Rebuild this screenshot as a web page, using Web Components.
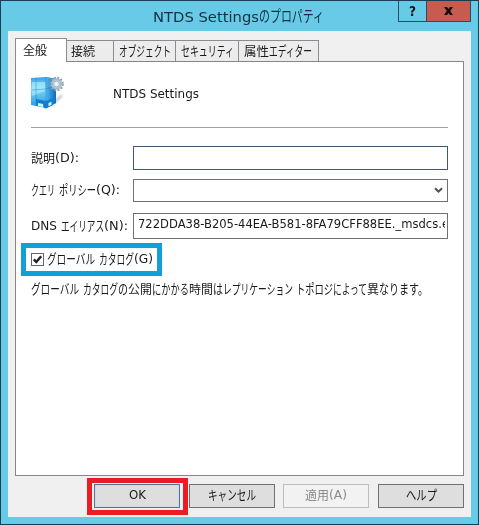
<!DOCTYPE html>
<html lang="ja"><head><meta charset="utf-8"><title>NTDS Settingsのプロパティ</title>
<style>html,body{margin:0;width:479px;height:525px;overflow:hidden}</style></head>
<body><ntds-dialog></ntds-dialog>
<script>
const define = (name, html, ready) => customElements.define(name, class extends HTMLElement {
  constructor() { super(); this.attachShadow({mode: 'open'}).innerHTML = html; }
  connectedCallback() { if (ready) ready(this, this.shadowRoot); }
});

// A run of text condensed to the advance width given in "w"; "g" is the gap before it.
// Kana are set larger before condensing, which gives tall, narrow forms.
define('ui-run', `<style>:host{display:block;flex:none;white-space:pre}span{display:inline-block;transform-origin:0 50%;vertical-align:top}</style><span><slot></slot></span>`,
  (el, root) => {
    const s = root.querySelector('span'), w = parseFloat(el.getAttribute('w'));
    if (/^[\u3040-\u30ff]/.test(el.textContent)) s.style.fontSize = '1.12em';
    else if (/^[\u4e00-\u9fff]/.test(el.textContent)) s.style.fontSize = '1.04em';
    el.style.width = w + 'px';
    el.style.marginLeft = (el.getAttribute('g') || 0) + 'px';
    s.style.transform = 'scaleX(' + w / s.getBoundingClientRect().width + ')';
  });

define('ui-tab', `<style>
:host{box-sizing:border-box;display:flex;height:21px;border:1px solid #8b8b92;border-left:0;border-bottom:0;padding:1px 0 0 5px;align-items:center;background:#ececed}
:host([active]){height:24px;background:#fff;border-left:1px solid #8b8b92;padding-left:7px;padding-bottom:2px;margin-bottom:-1px;z-index:1}
</style><slot></slot>`);

define('ui-field', `<style>
:host{box-sizing:border-box;display:flex;width:315px;border:1px solid #6f7072;background:#fff;padding:0 2px 0 4px;align-items:center;flex:none}
:host([focused]){border-color:#3d5a70}
.v{display:flex;overflow:hidden;flex:1;min-width:0}
svg{display:none;margin-right:2px}:host([combo]) svg{display:block}
</style><div class="v"><slot></slot></div><svg width="9" height="7" viewBox="0 0 9 7"><path d="M1 1.2 4.5 4.7 8 1.2" fill="none" stroke="#505050" stroke-width="2"/></svg>`);

define('ui-row', `<style>:host{display:flex;align-items:center}.l{display:flex;width:102px;flex:none}</style><div class="l"><slot name="label"></slot></div><slot></slot>`);

define('ui-label', `<style>:host{display:flex}</style><slot></slot>`);

define('ui-button', `<style>
:host{box-sizing:border-box;display:flex;width:86px;height:24px;border:1px solid #707070;background:#dedede;align-items:center;justify-content:center;padding-bottom:1px;flex:none}
:host([default]){border-color:#4f7895;box-shadow:inset 0 0 0 1px #cbdbe5}
:host([disabled]){border-color:#bdbdbd;background:#f2f2f2;color:#8b8b8b}
</style><slot></slot>`);

define('ui-highlight', `<style>:host{box-sizing:border-box;display:flex;align-items:center;border:5px solid var(--mark)}</style><slot></slot>`);

define('ui-check', `<style>:host{display:flex;align-items:center}svg{display:block;margin-right:3px}</style>
<svg width="13" height="13" viewBox="0 0 13 13"><rect x=".5" y=".5" width="12" height="12" fill="#fff" stroke="#666"/><path d="M2.8 6.4 5.3 9 10.2 3.2" fill="none" stroke="#222" stroke-width="2.4"/></svg><slot></slot>`);

define('server-icon', `<style>:host{display:block;width:34px;height:34px;flex:none;margin-bottom:3px}svg{display:block}</style>
<svg width="34" height="34" viewBox="0 0 34 34">
<defs><linearGradient id="f" x1="0" y1="0" x2="0" y2="1"><stop offset="0" stop-color="#3a9fdf"/><stop offset=".35" stop-color="#84daf8"/><stop offset="1" stop-color="#2296df"/></linearGradient>
<linearGradient id="s"><stop offset="0" stop-color="#56b5ec"/><stop offset="1" stop-color="#086bc0"/></linearGradient>
<filter id="b"><feGaussianBlur stdDeviation="1"/></filter></defs>
<path d="M20 28 31 18v3L20 30z" fill="#8f989d" opacity=".65" filter="url(#b)"/>
<path d="M0 2 15 1 25 3v24l-10 5L0 29z" fill="url(#f)"/>
<path d="M15 1 25 3v24l-10 5z" fill="url(#s)"/>
<path d="M1 6h13v9L1 20z" fill="#b5effd" opacity=".6"/>
<path d="M5 2v26M15 1v24M1 14l14-1 10-4" fill="none" stroke="#187fc9" stroke-width=".8" opacity=".55"/>
<path d="M5 23 15 25 24 21v4l-2 1v3l-7 3.500-2-.500v-3l-5-1v2l-3-.600z" fill="#127ed0"/>
<path d="M7 27l5 1v3l-5-1zM17.500 27l3-1.300v3l-3 1.500z" fill="#d7f3fd"/>
<circle cx="25.500" cy="8" r="6.300" fill="none" stroke="#8b9fac" stroke-width="2" stroke-dasharray="1.900 1.400"/>
<circle cx="25.500" cy="8" r="4.600" fill="#eff8fd" stroke="#a6bac7" stroke-width="2.200"/><circle cx="25.500" cy="8" r="2.900" fill="#e5f5fc" stroke="#7292a8" stroke-width=".7"/>
</svg>`);

define('title-bar', `<style>
:host{box-sizing:border-box;display:flex;height:30px;padding-left:145px;font-size:14.3px;line-height:20px;color:#15303f}
.t{display:flex;padding-top:6px;width:237px;flex:none}
.c{display:flex;width:74px;height:21px;border:1px solid #264d60;border-top:0;box-sizing:border-box;margin-left:8px}
.h,.x{display:flex;align-items:center;justify-content:center;color:#101010}
.h{width:27px;border-right:1px solid #264d60;font:bold 14px "DejaVu Sans",sans-serif}
.x{flex:1;background:#c65b50}
svg{display:block}
</style><div class="t"><slot></slot></div><div class="c"><div class="h"><ui-run w="7">?</ui-run></div><div class="x"><svg width="9" height="8" viewBox="0 0 9 8"><path d="M0 0h3l1.500 2L6 0h3L6.200 4 9 8H6L4.500 6 3 8H0l2.800-4z" fill="#150d0d"/></svg></div></div>`);

define('ntds-dialog', `<style>
:host{box-sizing:border-box;display:flex;flex-direction:column;width:479px;height:525px;background:#67cae7;border:1px solid #153f52;padding:0 7px 7px;font:12px/17px "DejaVu Sans","Noto Sans CJK JP",sans-serif;color:#1a1a1a}
.body{box-sizing:border-box;width:463px;height:486px;background:#f0f0f0;padding:8px 7px 0;flex:none}
.tabs{display:flex;align-items:flex-end;height:22px;position:relative}
.panel{box-sizing:border-box;height:415px;width:449px;border:1px solid #85858b;background:#fff;padding:12px 15px 0}
.head{display:flex;align-items:center;height:40px;gap:48px;width:417px}
.rule{height:1px;background:#a0a0a0;width:417px;margin:13px 0 18px}
.check{width:141px;height:33px;margin:4px 0 0 -10px;padding-left:5px;padding-bottom:1px;--mark:#129fd9}
.note{display:flex;margin-top:5px}
.buttons{display:flex;align-items:center;padding:1px 0 0 72px;height:39px;box-sizing:border-box}
.ok{width:101px;height:37px;padding-left:2px;--mark:#eb1c24;margin-right:1px}
.b3{margin-right:9px}
</style>
<title-bar><ui-run w="106">NTDS Settings</ui-run><ui-run w="65">のプロパティ</ui-run></title-bar>
<div class="body">
<div class="tabs">
<ui-tab active style="width:52px"><ui-run w="24">全般</ui-run></ui-tab>
<ui-tab style="width:47px;padding-left:4px"><ui-run w="24">接続</ui-run></ui-tab>
<ui-tab style="width:62px"><ui-run w="52">オブジェクト</ui-run></ui-tab>
<ui-tab style="width:63px"><ui-run w="53">セキュリティ</ui-run></ui-tab>
<ui-tab style="width:80px"><ui-run w="25">属性</ui-run><ui-run w="43">エディター</ui-run></ui-tab>
</div>
<div class="panel">
<div class="head"><server-icon></server-icon><ui-run w="86">NTDS Settings</ui-run></div>
<div class="rule"></div>
<ui-row><ui-label slot="label"><ui-run w="24">説明</ui-run><ui-run w="24">(D):</ui-run></ui-label><ui-field focused style="height:24px"></ui-field></ui-row>
<ui-row style="margin-top:9px"><ui-label slot="label"><ui-run w="24">クエリ</ui-run><ui-run w="37" g="4">ポリシー</ui-run><ui-run w="24">(Q):</ui-run></ui-label><ui-field combo style="height:23px"></ui-field></ui-row>
<ui-row style="margin-top:11px"><ui-label slot="label"><ui-run w="26">DNS</ui-run><ui-run w="43" g="4">エイリアス</ui-run><ui-run w="24">(N):</ui-run></ui-label><ui-field style="height:26px;padding-bottom:4px"><ui-run w="311">722DDA38-B205-44EA-B581-8FA79CFF88EE._msdcs.e</ui-run></ui-field></ui-row>
<ui-highlight class="check"><ui-check><ui-run w="48">グローバル</ui-run><ui-run w="35" g="4">カタログ</ui-run><ui-run w="19">(G)</ui-run></ui-check></ui-highlight>
<div class="note"><ui-run w="48">グローバル</ui-run><ui-run w="35" g="4">カタログ</ui-run><ui-run w="10">の</ui-run><ui-run w="24">公開</ui-run><ui-run w="37">にかかる</ui-run><ui-run w="24">時間</ui-run><ui-run w="10">は</ui-run><ui-run w="70">レプリケーション</ui-run><ui-run w="37" g="3">トポロジ</ui-run><ui-run w="34">によって</ui-run><ui-run w="12">異</ui-run><ui-run w="49">なります。</ui-run></div>
</div>
<div class="buttons">
<ui-highlight class="ok"><ui-button default><ui-run w="17">OK</ui-run></ui-button></ui-highlight>
<ui-button style="margin-right:8px"><ui-run w="48">キャンセル</ui-run></ui-button>
<ui-button disabled class="b3"><ui-run w="24">適用</ui-run><ui-run w="18">(A)</ui-run></ui-button>
<ui-button><ui-run w="31">ヘルプ</ui-run></ui-button>
</div>
</div>`);
</script></body></html>
